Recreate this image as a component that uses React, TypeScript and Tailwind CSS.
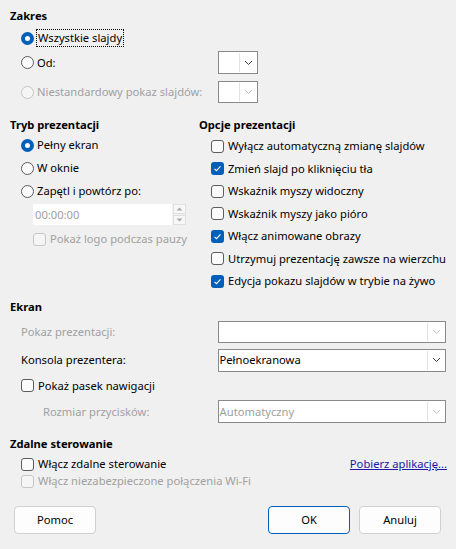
import React from 'react';

const font = { fontFamily: '"Noto Sans", "Open Sans", sans-serif' };

const Radio: React.FC<{ checked?: boolean; disabled?: boolean }> = ({ checked, disabled }) => {
  if (checked) {
    return (
      <span className="w-[13px] h-[13px] rounded-full bg-[#005fb8] flex items-center justify-center shrink-0">
        <span className="w-[5px] h-[5px] rounded-full bg-white" />
      </span>
    );
  }
  return (
    <span
      className={
        'w-[13px] h-[13px] rounded-full border shrink-0 ' +
        (disabled ? 'border-[#c5c5c5] bg-[#f5f5f5]' : 'border-[#5c5c5c] bg-[#fbfbfb]')
      }
    />
  );
};

const Check: React.FC<{ checked?: boolean; disabled?: boolean }> = ({ checked, disabled }) => {
  if (checked) {
    return (
      <span className="w-[13px] h-[13px] rounded-[3px] bg-[#005fb8] flex items-center justify-center shrink-0">
        <svg width="9" height="9" viewBox="0 0 9 9">
          <path d="M1.5 4.8 L3.5 6.7 L7.5 2.3" fill="none" stroke="white" strokeWidth="1.1" />
        </svg>
      </span>
    );
  }
  return (
    <span
      className={
        'w-[13px] h-[13px] rounded-[3px] border shrink-0 ' +
        (disabled ? 'border-[#c5c5c5] bg-[#f5f5f5]' : 'border-[#5c5c5c] bg-[#fbfbfb]')
      }
    />
  );
};

const Chevron: React.FC<{ disabled?: boolean }> = ({ disabled }) => (
  <svg width="9" height="6" viewBox="0 0 9 6">
    <path d="M1 1 L4.5 4.5 L8 1" fill="none" stroke={disabled ? '#c0c0c0' : '#404040'} strokeWidth="1" />
  </svg>
);

const Combo: React.FC<{ value?: string; disabled?: boolean; className: string }> = ({ value, disabled, className }) => (
  <div className={'flex bg-white border border-[#8a8a8a] ' + className}>
    <div className={'flex-1 flex items-center pl-[1px] ' + (disabled ? 'text-[#a0a0a0]' : 'text-black')}>{value}</div>
    <div className="w-[17px] m-[1px] ml-0 border-l border-[#e3e3e3] flex items-center justify-center">
      <Chevron disabled={disabled} />
    </div>
  </div>
);

const RadioRow: React.FC<{ label: string; checked?: boolean; disabled?: boolean; focus?: boolean }> = ({
  label,
  checked,
  disabled,
  focus,
}) => (
  <div className="flex items-center gap-[3px]">
    <Radio checked={checked} disabled={disabled} />
    <span
      className={
        (disabled ? 'text-[#a0a0a0] ' : 'text-black ') +
        (focus ? 'outline outline-1 outline-dotted outline-black px-[1px]' : '')
      }
    >
      {label}
    </span>
  </div>
);

const CheckRow: React.FC<{ label: string; checked?: boolean; disabled?: boolean; className?: string }> = ({
  label,
  checked,
  disabled,
  className,
}) => (
  <div className={'flex items-center gap-[4px] ' + (className ?? '')}>
    <Check checked={checked} disabled={disabled} />
    <span className={disabled ? 'text-[#a0a0a0]' : 'text-black'}>{label}</span>
  </div>
);

export default function App() {
  return (
    <div
      style={font}
      className="w-[456px] h-[549px] bg-[#f0f0f0] text-[11.2px] leading-[16px] whitespace-nowrap px-[10px] pt-[7px] flex flex-col"
    >
      {/* Zakres */}
      <div className="h-[18px] flex items-center font-bold">Zakres</div>
      <div className="mt-[3px] h-[20px] flex items-center pl-[11px]">
        <RadioRow label="Wszystkie slajdy" checked focus />
      </div>
      <div className="mt-[3px] h-[23px] flex items-center pl-[11px]">
        <div className="w-[197px]">
          <RadioRow label="Od:" />
        </div>
        <Combo className="w-[40px] h-[23px]" />
      </div>
      <div className="mt-[7px] h-[22px] flex items-center pl-[11px]">
        <div className="w-[197px]">
          <RadioRow label="Niestandardowy pokaz slajdów:" disabled />
        </div>
        <Combo className="w-[40px] h-[22px]" disabled />
      </div>

      {/* Two columns */}
      <div className="mt-[13px] flex">
        <div className="w-[191px] flex flex-col">
          <div className="h-[18px] flex items-center font-bold">Tryb prezentacji</div>
          <div className="mt-[1px] h-[20px] flex items-center pl-[11px]">
            <RadioRow label="Pełny ekran" checked />
          </div>
          <div className="mt-[3px] h-[20px] flex items-center pl-[11px]">
            <RadioRow label="W oknie" />
          </div>
          <div className="mt-[3px] h-[20px] flex items-center pl-[11px]">
            <RadioRow label="Zapętl i powtórz po:" />
          </div>
          <div className="mt-[3px] h-[21px] flex pl-[23px] gap-[1px]">
            <div className="w-[139px] bg-white flex items-center pl-[2px] text-[#a0a0a0]">00:00:00</div>
            <div className="w-[13px] flex flex-col gap-[1px]">
              <div className="flex-1 border border-[#e0e0e0] bg-[#f7f7f7] flex items-center justify-center">
                <svg width="7" height="4" viewBox="0 0 7 4">
                  <path d="M0.5 3.5 L3.5 0.5 L6.5 3.5 Z" fill="#a8a8a8" />
                </svg>
              </div>
              <div className="flex-1 border border-[#e0e0e0] bg-[#f7f7f7] flex items-center justify-center">
                <svg width="7" height="4" viewBox="0 0 7 4">
                  <path d="M0.5 0.5 L3.5 3.5 L6.5 0.5 Z" fill="#a8a8a8" />
                </svg>
              </div>
            </div>
          </div>
          <div className="mt-[4px] h-[20px] flex items-center pl-[23px]">
            <CheckRow label="Pokaż logo podczas pauzy" disabled />
          </div>
        </div>

        <div className="flex-1 flex flex-col">
          <div className="h-[18px] flex items-center font-bold">Opcje prezentacji</div>
          <div className="mt-[1px] flex flex-col pl-[12px]">
            <CheckRow className="h-[22.5px]" label="Wyłącz automatyczną zmianę slajdów" />
            <CheckRow className="h-[22.5px]" label="Zmień slajd po kliknięciu tła" checked />
            <CheckRow className="h-[22.5px]" label="Wskaźnik myszy widoczny" />
            <CheckRow className="h-[22.5px]" label="Wskaźnik myszy jako pióro" />
            <CheckRow className="h-[22.5px]" label="Włącz animowane obrazy" checked />
            <CheckRow className="h-[22.5px]" label="Utrzymuj prezentację zawsze na wierzchu" />
            <CheckRow className="h-[22.5px]" label="Edycja pokazu slajdów w trybie na żywo" checked />
          </div>
        </div>
      </div>

      {/* Ekran */}
      <div className="mt-[5px] h-[18px] flex items-center font-bold">Ekran</div>
      <div className="mt-[5px] h-[22px] flex items-center pl-[11px]">
        <div className="w-[197px] text-[#a0a0a0]">Pokaz prezentacji:</div>
        <Combo className="w-[229px] h-[22px]" disabled />
      </div>
      <div className="mt-[6px] h-[23px] flex items-center pl-[11px]">
        <div className="w-[197px]">Konsola prezentera:</div>
        <Combo className="w-[229px] h-[23px]" value="Pełnoekranowa" />
      </div>
      <div className="mt-[3px] h-[22px] flex items-center pl-[11px]">
        <CheckRow label="Pokaż pasek nawigacji" />
      </div>
      <div className="mt-[4px] h-[22px] flex items-center pl-[33px]">
        <div className="w-[175px] text-[#a0a0a0]">Rozmiar przycisków:</div>
        <Combo className="w-[229px] h-[23px]" value="Automatyczny" disabled />
      </div>

      {/* Zdalne sterowanie */}
      <div className="mt-[12px] h-[18px] flex items-center font-bold">Zdalne sterowanie</div>
      <div className="mt-[3px] h-[17px] flex items-center pl-[11px] justify-between">
        <CheckRow label="Włącz zdalne sterowanie" />
        <span className="text-[#1a1aa6] underline mr-[-1px]">Pobierz aplikację...</span>
      </div>
      <div className="h-[17px] flex items-center pl-[11px]">
        <CheckRow label="Włącz niezabezpieczone połączenia Wi-Fi" disabled />
      </div>

      {/* Buttons */}
      <div className="mt-[16px] h-[28px] flex pl-[4px] pr-[5px]">
        <button className="w-[82px] h-[28px] rounded-[4px] border border-[#d0d0d0] bg-[#fdfdfd] text-black">
          Pomoc
        </button>
        <div className="flex-1" />
        <button className="w-[82px] h-[28px] rounded-[4px] border border-[#005fb8] bg-[#fdfdfd] text-black">
          OK
        </button>
        <button className="ml-[9px] w-[82px] h-[28px] rounded-[4px] border border-[#d0d0d0] bg-[#fdfdfd] text-black">
          Anuluj
        </button>
      </div>
    </div>
  );
}
